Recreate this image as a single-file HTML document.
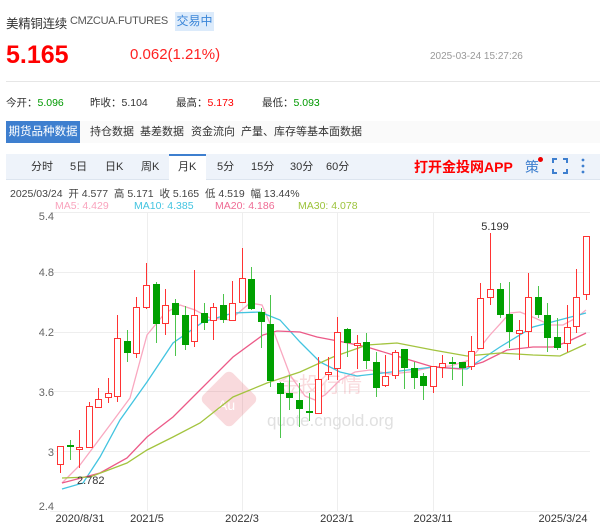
<!DOCTYPE html>
<html><head><meta charset="utf-8"><style>
*{margin:0;padding:0;box-sizing:border-box}
body{width:600px;height:524px;background:#fff;font-family:"Liberation Sans","Noto Sans CJK SC",sans-serif;position:relative;overflow:hidden;color:#333}
.a{position:absolute;white-space:nowrap}
</style></head><body>
<div class="a" style="left:6px;top:13px;font-size:12.5px;color:#333;letter-spacing:-0.3px">美精铜连续</div>
<div class="a" style="left:70px;top:15px;font-size:11px;color:#555;letter-spacing:-0.3px">CMZCUA.FUTURES</div>
<div class="a" style="left:175px;top:12px;width:39px;height:19px;background:#dcebfb;color:#3b86d8;font-size:12px;line-height:19px;text-align:center">交易中</div>
<div class="a" style="left:6px;top:41px;font-size:25px;font-weight:bold;color:#f00">5.165</div>
<div class="a" style="left:130px;top:46px;font-size:15px;color:#f22">0.062(1.21%)</div>
<div class="a" style="left:430px;top:51px;font-size:10px;color:#999">2025-03-24 15:27:26</div>
<div class="a" style="left:6px;top:81px;width:594px;height:1px;background:#e6e6e6"></div>
<div class="a" style="left:6px;top:95px;font-size:10.5px;color:#333">今开：<span style="color:#090">5.096</span></div>
<div class="a" style="left:90px;top:95px;font-size:10.5px;color:#333">昨收：5.104</div>
<div class="a" style="left:176px;top:95px;font-size:10.5px;color:#333">最高：<span style="color:#f00">5.173</span></div>
<div class="a" style="left:262px;top:95px;font-size:10.5px;color:#333">最低：<span style="color:#090">5.093</span></div>
<div class="a" style="left:6px;top:121px;width:594px;height:22px;background:#fafafa"></div>
<div class="a" style="left:6px;top:121px;width:74px;height:22px;background:#3e7fcf;color:#fff;font-size:11.5px;line-height:22px;text-align:center">期货品种数据</div>
<div class="a" style="left:90px;top:121px;font-size:11px;line-height:22px;color:#333">持仓数据</div>
<div class="a" style="left:140px;top:121px;font-size:11px;line-height:22px;color:#333">基差数据</div>
<div class="a" style="left:191px;top:121px;font-size:11px;line-height:22px;color:#333">资金流向</div>
<div class="a" style="left:241px;top:121px;font-size:11px;line-height:22px;color:#333">产量、库存等基本面数据</div>
<div class="a" style="left:6px;top:154px;width:594px;height:26px;background:#eef3fa;border-bottom:1px solid #dde5ef"></div>
<div class="a" style="left:169px;top:154px;width:37px;height:27px;background:#fff;border-top:2px solid #3e7fcf"></div>
<div class="a" style="left:0;top:154px;font-size:11px;line-height:26px;color:#333;width:600px">
<span class="a" style="left:31px">分时</span><span class="a" style="left:70px">5日</span><span class="a" style="left:105px">日K</span><span class="a" style="left:141px">周K</span><span class="a" style="left:178px">月K</span><span class="a" style="left:217px">5分</span><span class="a" style="left:251px">15分</span><span class="a" style="left:290px">30分</span><span class="a" style="left:326px">60分</span></div>
<div class="a" style="left:414px;top:157px;font-size:14px;font-weight:bold;color:#f00">打开金投网APP</div>
<div class="a" style="left:525px;top:157px;font-size:14px;color:#3e7fcf">策</div>
<div class="a" style="left:538px;top:157px;width:5px;height:5px;border-radius:50%;background:#e00"></div>
<svg class="a" style="left:552px;top:158px" width="16" height="16"><path d="M1 5V1h4M11 1h4v4M15 11v4h-4M5 15H1v-4" fill="none" stroke="#3e7fcf" stroke-width="2"/></svg>
<svg class="a" style="left:580px;top:158px" width="6" height="16"><circle cx="3" cy="2" r="1.4" fill="#3e7fcf"/><circle cx="3" cy="8" r="1.4" fill="#3e7fcf"/><circle cx="3" cy="14" r="1.4" fill="#3e7fcf"/></svg>
<div class="a" style="left:10px;top:186px;font-size:10.5px;color:#444">2025/03/24 &nbsp;开 4.577 &nbsp;高 5.171 &nbsp;收 5.165 &nbsp;低 4.519 &nbsp;幅 13.44%</div>
<div class="a" style="top:200px;font-size:10.5px;left:55px;color:#f9a3bd">MA5: 4.429</div>
<div class="a" style="top:200px;font-size:10.5px;left:134px;color:#43c4e0">MA10: 4.385</div>
<div class="a" style="top:200px;font-size:10.5px;left:215px;color:#ef6b94">MA20: 4.186</div>
<div class="a" style="top:200px;font-size:10.5px;left:298px;color:#9cc33b">MA30: 4.078</div>
<svg class="a" style="left:0;top:0" width="600" height="524" font-family="Liberation Sans,sans-serif">
<g stroke="#eee" stroke-width="1">
<line x1="50" y1="212.5" x2="590" y2="212.5"/><line x1="50" y1="272.5" x2="590" y2="272.5"/><line x1="50" y1="332.5" x2="590" y2="332.5"/><line x1="50" y1="391.5" x2="590" y2="391.5"/><line x1="50" y1="451.5" x2="590" y2="451.5"/><line x1="50" y1="511.5" x2="590" y2="511.5"/>
<line x1="147.5" y1="212" x2="147.5" y2="512"/><line x1="242.5" y1="212" x2="242.5" y2="512"/><line x1="337.5" y1="212" x2="337.5" y2="512"/><line x1="433.5" y1="212" x2="433.5" y2="512"/>
</g>
<g font-size="11" fill="#666" text-anchor="end"><text x="54" y="220">5.4</text><text x="54" y="276">4.8</text><text x="54" y="336">4.2</text><text x="54" y="396">3.6</text><text x="54" y="456">3</text><text x="54" y="510">2.4</text></g>
<g font-size="11" fill="#333" text-anchor="middle"><text x="80" y="522">2020/8/31</text><text x="147" y="522">2021/5</text><text x="242" y="522">2022/3</text><text x="337" y="522">2023/1</text><text x="433" y="522">2023/11</text><text x="563" y="522">2025/3/24</text></g>
<g opacity="0.16"><rect x="208" y="378" width="42" height="42" rx="6" transform="rotate(45 229 399)" fill="#d23"/><text x="218" y="410" font-size="14" fill="#fff">Au</text>
<text x="278" y="392" font-size="21" fill="#d23" font-family="Noto Sans CJK SC,sans-serif">金投行情</text></g>
<text x="267" y="426" font-size="17" fill="#ccc" opacity="0.6">quote.cngold.org</text>
<g fill="none" stroke-width="1.3">
<polyline stroke="#f9a8c0" points="62,483 80,465 95,445 110,425 130,398 147,335 165,313 180,305 195,310 210,318 230,320 250,303 262,305 275,335 290,375 305,396 315,400 325,395 340,380 355,372 370,370 390,374 410,372 433,367 450,366 470,360 490,335 510,313 520,312 535,318 550,325 563,325 576,318 586,310"/>
<polyline stroke="#43c4e0" points="62,489 83,483 100,457 120,420 147,382 173,343 203,322 233,313 260,312 280,320 300,342 320,362 340,372 357,376 383,373 433,367 467,369 500,347 533,327 567,318 586,313"/>
<polyline stroke="#ec5a88" points="62,483 100,473 127,458 147,437 173,417 200,390 233,357 263,335 277,331 300,332 317,337 343,342 367,347 400,357 433,367 460,369 483,362 507,350 533,347 553,347 567,342 586,333"/>
<polyline stroke="#a3c43f" points="62,478 90,477 127,463 147,450 173,437 200,423 233,397 267,383 300,372 333,357 367,345 397,343 433,350 467,356 500,353 533,355 560,356 586,344"/>
</g>
<text x="495" y="230" font-size="11" fill="#333" text-anchor="middle">5.199</text>
<text x="77" y="484" font-size="11" fill="#333">2.782</text>
<g stroke="#f33" stroke-width="1" fill="#fff">
<line x1="60.5" y1="446" x2="60.5" y2="473"/><rect x="57.5" y="446.5" width="6" height="18"/>
<line x1="79.5" y1="430" x2="79.5" y2="468"/><rect x="76.5" y="447.5" width="6" height="2"/>
<line x1="89.5" y1="402" x2="89.5" y2="448"/><rect x="86.5" y="406.5" width="6" height="41"/>
<line x1="98.5" y1="388" x2="98.5" y2="407"/><rect x="95.5" y="399.5" width="6" height="8"/>
<line x1="108.5" y1="378" x2="108.5" y2="403"/><rect x="105.5" y="393.5" width="6" height="4"/>
<line x1="117.5" y1="315" x2="117.5" y2="402"/><rect x="114.5" y="338.5" width="6" height="58"/>
<line x1="136.5" y1="297" x2="136.5" y2="358"/><rect x="133.5" y="307.5" width="6" height="46"/>
<line x1="146.5" y1="263" x2="146.5" y2="309"/><rect x="143.5" y="285.5" width="6" height="22"/>
<line x1="165.5" y1="289" x2="165.5" y2="335"/><rect x="162.5" y="305.5" width="6" height="18"/>
<line x1="194.5" y1="270" x2="194.5" y2="347"/><rect x="191.5" y="315.5" width="6" height="26"/>
<line x1="213.5" y1="303" x2="213.5" y2="340"/><rect x="210.5" y="307.5" width="6" height="13"/>
<line x1="232.5" y1="281" x2="232.5" y2="321"/><rect x="229.5" y="303.5" width="6" height="17"/>
<line x1="242.5" y1="248" x2="242.5" y2="303"/><rect x="239.5" y="278.5" width="6" height="24"/>
<line x1="318.5" y1="357" x2="318.5" y2="413"/><rect x="315.5" y="379.5" width="6" height="34"/>
<line x1="328.5" y1="357" x2="328.5" y2="380"/><rect x="325.5" y="372.5" width="6" height="2"/>
<line x1="337.5" y1="317" x2="337.5" y2="380"/><rect x="334.5" y="332.5" width="6" height="36"/>
<line x1="357.5" y1="335" x2="357.5" y2="369"/><rect x="354.5" y="343.5" width="6" height="2"/>
<line x1="385.5" y1="355" x2="385.5" y2="387"/><rect x="382.5" y="376.5" width="6" height="9"/>
<line x1="395.5" y1="350" x2="395.5" y2="379"/><rect x="392.5" y="352.5" width="6" height="23"/>
<line x1="433.5" y1="366" x2="433.5" y2="393"/><rect x="430.5" y="366.5" width="6" height="20"/>
<line x1="442.5" y1="355" x2="442.5" y2="378"/><rect x="439.5" y="363.5" width="6" height="4"/>
<line x1="471.5" y1="336" x2="471.5" y2="370"/><rect x="468.5" y="351.5" width="6" height="15"/>
<line x1="480.5" y1="283" x2="480.5" y2="349"/><rect x="477.5" y="298.5" width="6" height="50"/>
<line x1="490.5" y1="233" x2="490.5" y2="305"/><rect x="487.5" y="289.5" width="6" height="8"/>
<line x1="519.5" y1="320" x2="519.5" y2="360"/><rect x="516.5" y="330.5" width="6" height="3"/>
<line x1="528.5" y1="273" x2="528.5" y2="347"/><rect x="525.5" y="297.5" width="6" height="34"/>
<line x1="567.5" y1="305" x2="567.5" y2="352"/><rect x="564.5" y="327.5" width="6" height="16"/>
<line x1="576.5" y1="269" x2="576.5" y2="333"/><rect x="573.5" y="297.5" width="6" height="29"/>
<line x1="586.5" y1="236" x2="586.5" y2="300"/><rect x="583.5" y="236.5" width="6" height="58"/>
</g>
<g stroke="#4cc44c" stroke-width="1">
<line x1="70.5" y1="440" x2="70.5" y2="460"/><line x1="127.5" y1="330" x2="127.5" y2="362"/><line x1="156.5" y1="282" x2="156.5" y2="343"/><line x1="175.5" y1="299" x2="175.5" y2="356"/><line x1="185.5" y1="306" x2="185.5" y2="350"/><line x1="204.5" y1="303" x2="204.5" y2="330"/><line x1="223.5" y1="294" x2="223.5" y2="323"/><line x1="251.5" y1="267" x2="251.5" y2="310"/><line x1="261.5" y1="308" x2="261.5" y2="348"/><line x1="270.5" y1="295" x2="270.5" y2="387"/><line x1="280.5" y1="382" x2="280.5" y2="438"/><line x1="289.5" y1="375" x2="289.5" y2="410"/><line x1="299.5" y1="383" x2="299.5" y2="427"/><line x1="309.5" y1="393" x2="309.5" y2="421"/><line x1="347.5" y1="328" x2="347.5" y2="357"/><line x1="366.5" y1="333" x2="366.5" y2="369"/><line x1="376.5" y1="352" x2="376.5" y2="397"/><line x1="404.5" y1="349" x2="404.5" y2="389"/><line x1="414.5" y1="362" x2="414.5" y2="389"/><line x1="423.5" y1="373" x2="423.5" y2="400"/><line x1="452.5" y1="357" x2="452.5" y2="380"/><line x1="462.5" y1="362" x2="462.5" y2="386"/><line x1="500.5" y1="283" x2="500.5" y2="318"/><line x1="509.5" y1="282" x2="509.5" y2="348"/><line x1="538.5" y1="286" x2="538.5" y2="318"/><line x1="547.5" y1="303" x2="547.5" y2="352"/><line x1="557.5" y1="318" x2="557.5" y2="350"/>
</g>
<g fill="#00a000">
<rect x="67" y="445" width="7" height="2"/><rect x="124" y="341" width="7" height="12"/><rect x="153" y="284" width="7" height="40"/><rect x="172" y="303" width="7" height="12"/><rect x="182" y="315" width="7" height="30"/><rect x="201" y="313" width="7" height="10"/><rect x="220" y="305" width="7" height="15"/><rect x="248" y="279" width="7" height="30"/><rect x="258" y="312" width="7" height="10"/><rect x="267" y="324" width="7" height="57"/><rect x="277" y="383" width="7" height="11"/><rect x="286" y="393" width="7" height="5"/><rect x="296" y="400" width="7" height="9"/><rect x="306" y="411" width="7" height="2"/><rect x="344" y="329" width="7" height="14"/><rect x="363" y="342" width="7" height="19"/><rect x="373" y="362" width="7" height="26"/><rect x="401" y="349" width="7" height="19"/><rect x="411" y="368" width="7" height="10"/><rect x="420" y="376" width="7" height="10"/><rect x="449" y="362" width="7" height="2"/><rect x="459" y="362" width="7" height="6"/><rect x="497" y="289" width="7" height="26"/><rect x="506" y="314" width="7" height="18"/><rect x="535" y="297" width="7" height="18"/><rect x="544" y="315" width="7" height="23"/><rect x="554" y="337" width="7" height="11"/>
</g>
</svg>
</body></html>
